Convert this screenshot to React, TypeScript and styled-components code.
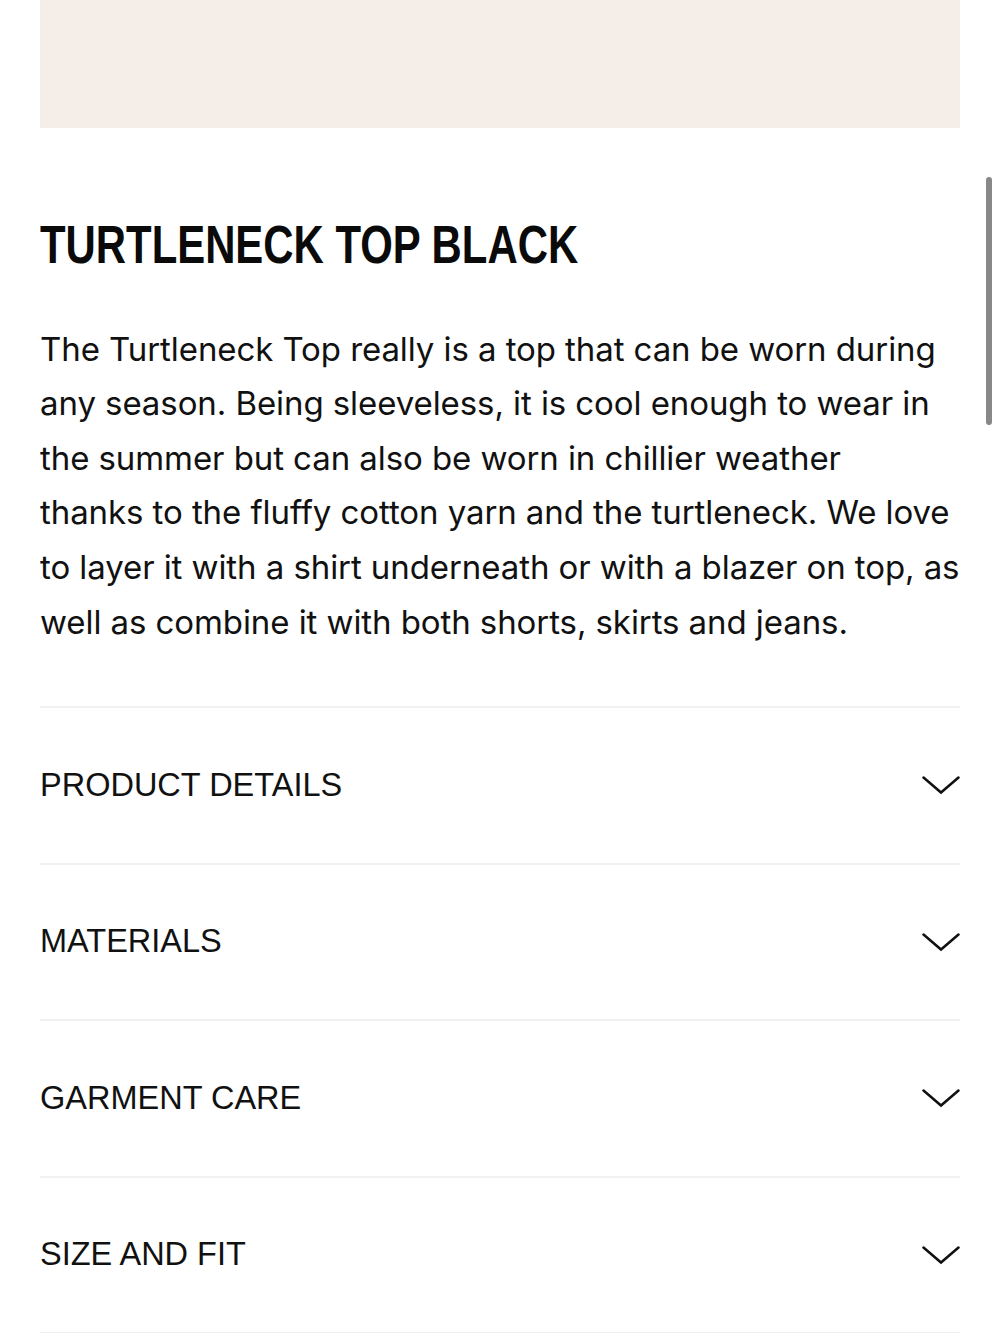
import React from "react";
import styled, { createGlobalStyle } from "styled-components";

const GlobalStyle = createGlobalStyle`
  html, body {
    margin: 0;
    padding: 0;
    background: #fff;
  }
  body {
    font-family: "Liberation Sans", Arial, sans-serif;
    color: #111;
  }
`;

const Page = styled.div`
  position: relative;
  width: 1000px;
  min-height: 1333px;
  padding: 0 40px;
  box-sizing: border-box;
  overflow: hidden;
`;

const ImageArea = styled.div`
  height: 128px;
  background: #f5ede8;
`;

// condensed display face: no narrow family installed, so squeeze the bold sans
const Title = styled.h1`
  margin: 85px 0 0;
  font-family: "Liberation Sans", Arial, sans-serif;
  font-weight: 700;
  font-size: 53px;
  line-height: 1.2;
  color: #0a0a0a;
  white-space: nowrap;
  transform: scaleX(0.79);
  transform-origin: left center;
`;

const Description = styled.p`
  margin: 45px 0 0;
  font-family: Inter, "Liberation Sans", sans-serif;
  font-size: 33px;
  line-height: 54.6px;
  letter-spacing: -0.08px;
  white-space: nowrap;
  color: #111;
`;

const Accordion = styled.div`
  margin-top: 57px;
  border-bottom: 2px solid #f1f1f1;
`;

const Row = styled.div`
  height: 156.5px;
  box-sizing: border-box;
  border-top: 2px solid #f1f1f1;
  display: flex;
  align-items: center;
  justify-content: space-between;
`;

const Label = styled.span`
  font-family: "Liberation Sans", Arial, sans-serif;
  font-size: 32.5px;
  color: #111;
`;

const Scrollbar = styled.div`
  position: absolute;
  top: 177px;
  right: 8px;
  width: 6px;
  height: 248px;
  border-radius: 3px;
  background: #888;
`;

const Chevron = () => (
  <svg width="38" height="20" viewBox="0 0 38 20" fill="none">
    <polyline
      points="1.5,2.5 19,17.5 36.5,2.5"
      stroke="#111"
      strokeWidth="2.5"
      strokeLinecap="round"
      strokeLinejoin="miter"
    />
  </svg>
);

const sections = ["PRODUCT DETAILS", "MATERIALS", "GARMENT CARE", "SIZE AND FIT"];

export default function App() {
  return (
    <Page>
      <GlobalStyle />
      <ImageArea />
      <Title>TURTLENECK TOP BLACK</Title>
      <Description>
        The Turtleneck Top really is a top that can be worn during
        <br />
        any season. Being sleeveless, it is cool enough to wear in
        <br />
        the summer but can also be worn in chillier weather
        <br />
        thanks to the fluffy cotton yarn and the turtleneck. We love
        <br />
        to layer it with a shirt underneath or with a blazer on top, as
        <br />
        well as combine it with both shorts, skirts and jeans.
      </Description>
      <Accordion>
        {sections.map((s) => (
          <Row key={s}>
            <Label>{s}</Label>
            <Chevron />
          </Row>
        ))}
      </Accordion>
      <Scrollbar />
    </Page>
  );
}
